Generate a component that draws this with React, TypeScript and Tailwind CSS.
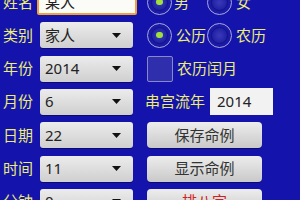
import React from "react";

const font = { fontFamily: '"Noto Sans", "Noto Sans CJK SC", sans-serif' };

function Select({ value }: { value: string }) {
  return (
    <div className="w-[93px] h-[26px] rounded-[3px] bg-gradient-to-b from-[#ececec] to-[#cfcfcf] flex items-center justify-between pl-[5px] pr-[12px] text-[15px] text-[#222] leading-none shadow-[0_1px_0_#0a0a70]">
      <span>{value}</span>
      <svg width="9" height="5" viewBox="0 0 9 5"><path d="M0 0h9L4.5 5z" fill="#111" /></svg>
    </div>
  );
}

function Radio({ checked }: { checked?: boolean }) {
  return (
    <div className="w-[25px] h-[25px] rounded-full border-[1.5px] border-[#a8a8dc] flex items-center justify-center bg-[#1a1aa6]">
      <div className="w-[17px] h-[17px] rounded-full bg-[radial-gradient(circle,#3a3ab8_0%,#2424a8_60%,#1a1a9c_100%)] flex items-center justify-center border border-[#12128a]">
        {checked && <div className="w-[7px] h-[6px] rounded-full bg-[#9fe03c]" />}
      </div>
    </div>
  );
}

function Btn({ children, red }: { children: React.ReactNode; red?: boolean }) {
  return (
    <div className={`w-[115px] h-[26px] rounded-[4px] bg-gradient-to-b from-[#ededed] to-[#c9c9c9] flex items-center justify-center text-[15px] leading-none shadow-[0_1px_0_#0a0a70] ${red ? "text-[#d02020]" : "text-[#333]"}`}>
      {children}
    </div>
  );
}

export default function App() {
  const rows: { label: string; left: React.ReactNode; right: React.ReactNode }[] = [
    {
      label: "姓名",
      left: (
        <div className="-ml-[3px] w-[100px] h-[26px] bg-[#fbfbf8] border-2 border-[#f2a13a] rounded-[2px] flex items-center pl-[6px] text-[15px] text-[#222] leading-none">某人</div>
      ),
      right: (
        <div className="flex items-center">
          <Radio checked />
          <span className="ml-[2px] w-[33px]">男</span>
          <Radio />
          <span className="ml-[4px]">女</span>
        </div>
      ),
    },
    {
      label: "类别",
      left: <Select value="家人" />,
      right: (
        <div className="flex items-center">
          <Radio checked />
          <span className="ml-[4px] w-[31px]">公历</span>
          <Radio />
          <span className="ml-[4px]">农历</span>
        </div>
      ),
    },
    {
      label: "年份",
      left: <Select value="2014" />,
      right: (
        <div className="flex items-center">
          <div className="w-[26px] h-[26px] border border-[#8888c8] rounded-[2px] bg-[#2f2fae]" />
          <span className="ml-[4px]">农历闰月</span>
        </div>
      ),
    },
    {
      label: "月份",
      left: <Select value="6" />,
      right: (
        <div className="flex items-center -ml-[2px]">
          <span className="w-[65px]">串宫流年</span>
          <div className="w-[63px] h-[27px] bg-[#f2f2f2] flex items-center pl-[7px] text-[15px] text-[#222] leading-none">2014</div>
        </div>
      ),
    },
    { label: "日期", left: <Select value="22" />, right: <Btn>保存命例</Btn> },
    { label: "时间", left: <Select value="11" />, right: <Btn>显示命例</Btn> },
    { label: "分钟", left: <Select value="0" />, right: <Btn red>排八字</Btn> },
  ];
  return (
    <div className="w-[300px] h-[200px] overflow-hidden bg-[#1414ac]" style={font}>
      <div className="flex flex-col gap-[7.33px] mt-[-11px]">
        {rows.map((r) => (
          <div key={r.label} className="flex items-center h-[26px] text-[15px] text-[#ecec74] leading-none">
            <div className="w-[40px] pl-[3px]">{r.label}</div>
            <div className="w-[107px]">{r.left}</div>
            <div>{r.right}</div>
          </div>
        ))}
      </div>
    </div>
  );
}
